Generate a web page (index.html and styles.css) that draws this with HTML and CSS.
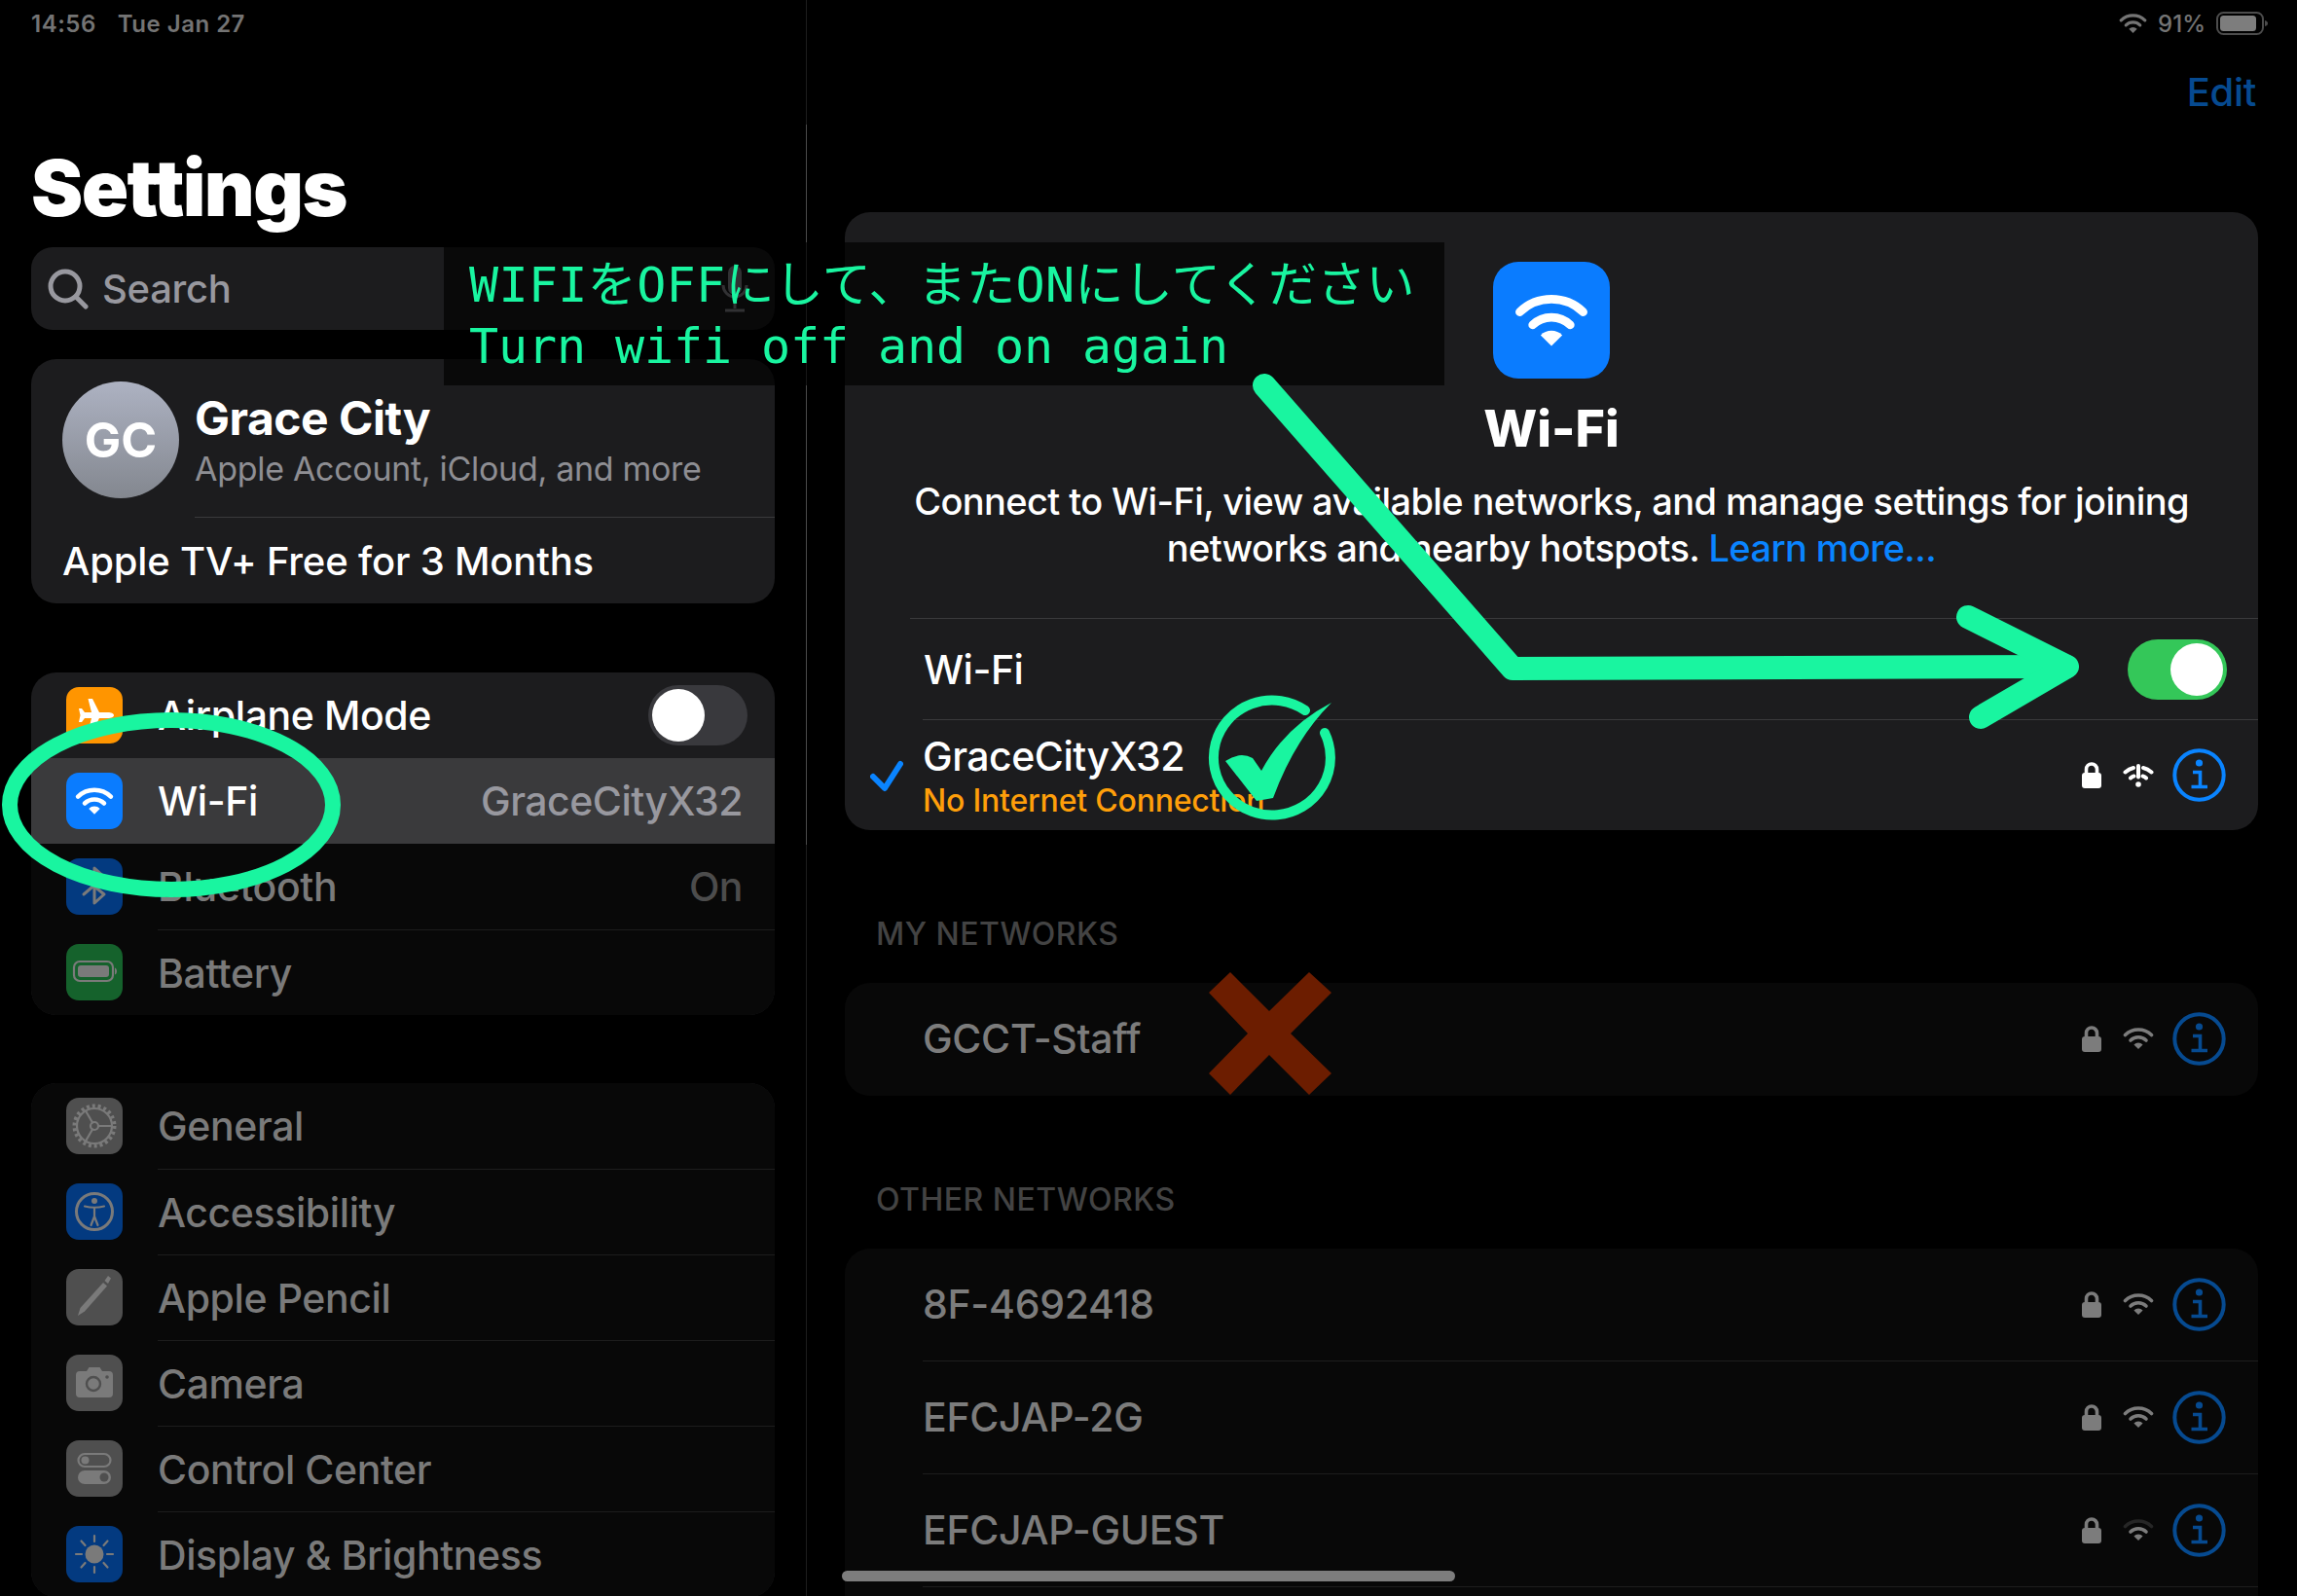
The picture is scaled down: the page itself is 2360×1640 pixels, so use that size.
FILE: index.html
```html
<!DOCTYPE html>
<html lang="en">
  <head>
    <meta charset="UTF-8" />
    <title>Settings - Wi-Fi</title>
    <link rel="stylesheet" href="styles.css">
  </head>

  <body>
    <!-- shared icons -->
    <svg class="defs" width="0" height="0">
      <symbol id="i-wifi" viewBox="0 0 32 24">
        <path class="arc arc-outer" d="M2.5 8.500a19.500 19.500 0 0 1 27 0" />
        <path class="arc" d="M8 14a11.600 11.600 0 0 1 16 0" />
        <path class="solid" d="M16 23l-4.600-4.600a6.500 6.500 0 0 1 9.200 0z" />
      </symbol>
      <symbol id="i-lock" viewBox="0 0 20 27">
        <rect class="solid" x="0" y="11" width="20" height="16" rx="3" />
        <path class="arc" d="M4.500 12V7.500a5.500 5.500 0 0 1 11 0V12" />
      </symbol>
      <symbol id="i-info" viewBox="0 0 55 55">
        <circle class="ring" cx="27.500" cy="27.500" r="25.200" />
        <circle class="solid" cx="27.500" cy="15" r="3.600" />
        <path class="serif" d="M21 24.500h7.500v15M19.500 39.500h16.500" />
      </symbol>
    </svg>

    <div class="app">
      <aside class="sidebar">
        <div class="status status-left"><span>14:56</span><span>Tue Jan 27</span></div>
        <h1 class="page-title">Settings</h1>

        <div class="search">
          <svg class="search-icon" viewBox="0 0 42 42">
            <circle cx="18" cy="18" r="15" />
            <path d="M29 29l10 10" />
          </svg>
          <span class="search-text">Search</span>
          <svg class="mic" viewBox="0 0 28 48">
            <rect x="7" y="0" width="14" height="30" rx="7" />
            <path class="mic-line" d="M2 20a12 12 0 0 0 24 0M14 33v11M4 46h20" />
          </svg>
        </div>

        <section class="card profile">
          <div class="profile-top">
            <div class="avatar">GC</div>
            <div class="profile-text">
              <div class="profile-name">Grace City</div>
              <div class="profile-sub">Apple Account, iCloud, and more</div>
            </div>
          </div>
          <div class="profile-offer">Apple TV+ Free for 3 Months</div>
        </section>

        <section class="card group">
          <div class="row">
            <div class="app-icon orange">
              <svg viewBox="0 0 58 58"><path class="solid" d="M49 29c0 2-3 3-6 3h-9l-7 14h-4.500l3.500-14h-7l-3 4h-3l1.500-7-1.500-7h3l3 4h7l-3.500-14h4.500l7 14h9c3 0 6 1 6 3z" /></svg>
            </div>
            <div class="row-body">
              <span class="row-label">Airplane Mode</span>
              <div class="toggle side-toggle"><div class="knob"></div></div>
            </div>
          </div>
          <div class="row selected">
            <div class="app-icon blue">
              <svg class="icon-wifi" viewBox="0 0 32 24"><use href="#i-wifi" /></svg>
            </div>
            <div class="row-body">
              <span class="row-label">Wi-Fi</span>
              <span class="row-value">GraceCityX32</span>
            </div>
          </div>
          <div class="row dim">
            <div class="app-icon dim-blue">
              <svg viewBox="0 0 58 58"><path class="line" d="M18 20l21 17-10 9V10l10 9-21 18" /></svg>
            </div>
            <div class="row-body">
              <span class="row-label">Bluetooth</span>
              <span class="row-value">On</span>
            </div>
          </div>
          <div class="row dim ruled">
            <div class="app-icon dim-green">
              <svg viewBox="0 0 58 58">
                <rect class="line thin" x="8" y="18" width="40" height="20" rx="6" />
                <rect class="solid" x="12" y="22" width="32" height="12" rx="3" />
                <path class="solid" d="M50 24.500c1.500.5 2 2 2 3.500s-.5 3-2 3.500z" />
              </svg>
            </div>
            <div class="row-body"><span class="row-label">Battery</span></div>
          </div>
        </section>

        <section class="card group group-second">
          <div class="row dim">
            <div class="app-icon dim-gray">
              <svg viewBox="0 0 58 58">
                <circle class="teeth" cx="29" cy="29" r="20.500" />
                <circle class="line thin" cx="29" cy="29" r="18" />
                <path class="line thin" d="M33 29h14M27 25.500l-7-12M27 32.500l-7 12" />
                <circle class="line thin" cx="29" cy="29" r="4" />
              </svg>
            </div>
            <div class="row-body"><span class="row-label">General</span></div>
          </div>
          <div class="row dim ruled">
            <div class="app-icon dim-blue">
              <svg viewBox="0 0 58 58">
                <circle class="line" cx="29" cy="29" r="18.500" />
                <circle class="solid" cx="29" cy="18" r="3" />
                <path class="line thin" d="M19 23.500q10 2.500 20 0M29 25v9M29 34l-3.500 9M29 34l3.500 9" />
              </svg>
            </div>
            <div class="row-body"><span class="row-label">Accessibility</span></div>
          </div>
          <div class="row dim ruled">
            <div class="app-icon dim-gray">
              <svg viewBox="0 0 58 58">
                <path class="solid" d="M12 48l2.500-8 23.500-26 4 3.500-23 26z" />
                <path class="solid" d="M39.500 12l3.500-5 3 2.500-3 5.500z" />
              </svg>
            </div>
            <div class="row-body"><span class="row-label">Apple Pencil</span></div>
          </div>
          <div class="row dim ruled">
            <div class="app-icon dim-gray">
              <svg viewBox="0 0 58 58">
                <path class="solid" d="M14 17h7l2.500-4h11l2.500 4h7a4 4 0 0 1 4 4v19a4 4 0 0 1-4 4H14a4 4 0 0 1-4-4V21a4 4 0 0 1 4-4z" />
                <circle class="cut" cx="28" cy="30" r="7" />
                <circle class="cut-dot" cx="42" cy="23" r="1.800" />
              </svg>
            </div>
            <div class="row-body"><span class="row-label">Camera</span></div>
          </div>
          <div class="row dim ruled">
            <div class="app-icon dim-gray">
              <svg viewBox="0 0 58 58">
                <rect class="line thin" x="12.500" y="14" width="33" height="13" rx="6.500" />
                <circle class="solid" cx="19.500" cy="20.500" r="4" />
                <rect class="solid" x="12" y="31" width="34" height="14" rx="7" />
                <circle class="cut-dot" cx="39" cy="38" r="4.500" />
              </svg>
            </div>
            <div class="row-body"><span class="row-label">Control Center</span></div>
          </div>
          <div class="row dim ruled">
            <div class="app-icon dim-blue">
              <svg viewBox="0 0 58 58">
                <circle class="solid" cx="29" cy="29" r="9.500" />
                <path class="line thin" d="M29 10v6M29 42v6M10 29h6M42 29h6M15.500 15.500l4 4.500M38.500 38l4 4.500M15.500 42.500l4-4.500M38.500 20l4-4.500" />
              </svg>
            </div>
            <div class="row-body"><span class="row-label">Display &amp; Brightness</span></div>
          </div>
        </section>
      </aside>

      <div class="pane-rule"></div>

      <main class="detail">
        <div class="status status-right">
          <svg class="status-wifi" viewBox="0 0 32 24"><use href="#i-wifi" /></svg>
          <span>91%</span>
          <svg class="status-battery" viewBox="0 0 54 24">
            <rect class="batt-shell" x="1" y="1" width="47" height="22" rx="6.500" />
            <rect class="batt-level" x="4" y="4" width="37" height="16" rx="3.500" />
            <path class="batt-tip" d="M50 9c2 .5 3 1.500 3 3s-1 2.500-3 3z" />
          </svg>
        </div>
        <div class="nav-bar"><span class="edit">Edit</span></div>

        <section class="card wifi-card">
          <div class="hero">
            <div class="hero-icon">
              <svg viewBox="0 0 32 24"><use href="#i-wifi" /></svg>
            </div>
            <h2 class="hero-title">Wi-Fi</h2>
            <p class="hero-text">
              Connect to Wi-Fi, view available networks, and manage settings for joining<br />
              networks and nearby hotspots. <span class="link">Learn more...</span>
            </p>
          </div>
          <div class="wifi-switch">
            <span class="net-name">Wi-Fi</span>
            <div class="toggle on"><div class="knob"></div></div>
          </div>
          <div class="net current">
            <div class="gutter">
              <svg class="tick" viewBox="0 0 34 33"><path d="M3 17l12 12L31 4" /></svg>
            </div>
            <div class="net-body">
              <div class="net-label">
                <div class="net-name">GraceCityX32</div>
                <div class="net-warn">No Internet Connection</div>
              </div>
              <svg class="lock"><use href="#i-lock" /></svg>
              <svg class="signal" viewBox="0 0 32 24">
                <path class="arc" d="M2.500 8.500q4-3.500 8.500-4.500M29.500 8.500q-4-3.500-8.500-4.500M8 14.500q1.500-1.500 3.500-2M24 14.500q-1.500-1.500-3.500-2" />
                <rect class="solid" x="14" y="0" width="4" height="15.500" rx="2" />
                <circle class="solid" cx="16" cy="21" r="2.800" />
              </svg>
              <svg class="info"><use href="#i-info" /></svg>
            </div>
          </div>
        </section>

        <h3 class="section-head">MY NETWORKS</h3>
        <section class="card dim-card">
          <div class="net">
            <div class="gutter"></div>
            <div class="net-body">
              <div class="net-label"><div class="net-name">GCCT-Staff</div></div>
              <svg class="lock"><use href="#i-lock" /></svg>
              <svg class="signal"><use href="#i-wifi" /></svg>
              <svg class="info"><use href="#i-info" /></svg>
            </div>
          </div>
        </section>

        <h3 class="section-head">OTHER NETWORKS</h3>
        <section class="card dim-card">
          <div class="net">
            <div class="gutter"></div>
            <div class="net-body">
              <div class="net-label"><div class="net-name">8F-4692418</div></div>
              <svg class="lock"><use href="#i-lock" /></svg>
              <svg class="signal"><use href="#i-wifi" /></svg>
              <svg class="info"><use href="#i-info" /></svg>
            </div>
          </div>
          <div class="net ruled">
            <div class="gutter"></div>
            <div class="net-body">
              <div class="net-label"><div class="net-name">EFCJAP-2G</div></div>
              <svg class="lock"><use href="#i-lock" /></svg>
              <svg class="signal"><use href="#i-wifi" /></svg>
              <svg class="info"><use href="#i-info" /></svg>
            </div>
          </div>
          <div class="net ruled">
            <div class="gutter"></div>
            <div class="net-body">
              <div class="net-label"><div class="net-name">EFCJAP-GUEST</div></div>
              <svg class="lock"><use href="#i-lock" /></svg>
              <svg class="signal weak"><use href="#i-wifi" /></svg>
              <svg class="info"><use href="#i-info" /></svg>
            </div>
          </div>
          <div class="net ruled"></div>
        </section>
      </main>
    </div>

    <div class="home-bar"></div>

    <!-- annotations drawn on top of the screenshot -->
    <div class="note">
      <div class="note-ja">WIFIをOFFにして、またONにしてください</div>
      <div class="note-en">Turn wifi off and on again</div>
    </div>

    <svg class="marks" viewBox="0 0 2360 1640">
      <ellipse class="mark" cx="176" cy="827" rx="166" ry="87" />
      <path class="mark arrow" d="M1299 396L1554 687L2123 685" />
      <path class="mark arrow" d="M2022 634L2124 685L2035 737" />
      <path class="mark check-ring" d="M1341 730A60 59 0 1 0 1361 753" />
      <path class="mark-fill" d="M1259 782Q1274 772 1287 779L1296 792Q1320 747 1368 722Q1330 760 1308 820L1291 823Z" />
      <polygon class="cross" points="1264,999 1304,1039 1345,999 1368,1020 1326,1062 1368,1103 1345,1125 1304,1084 1264,1125 1242,1103 1282,1062 1242,1020" />
    </svg>
  </body>
</html>
```

FILE: styles.css
```css
* {
  margin: 0;
  padding: 0;
  box-sizing: border-box;
}

html,
body {
  width: 2360px;
  height: 1640px;
  overflow: hidden;
  background: #000;
}

body {
  position: relative;
  font-family: Inter, "Liberation Sans", sans-serif;
  color: #fff;
}

.defs {
  position: absolute;
}

/* shared svg parts */
.arc {
  fill: none;
  stroke: currentColor;
  stroke-width: 3.6;
  stroke-linecap: round;
}

.arc-outer {
  stroke: var(--outer, currentColor);
}

.solid {
  fill: currentColor;
}

.line {
  fill: none;
  stroke: currentColor;
  stroke-width: 3;
  stroke-linecap: round;
  stroke-linejoin: round;
}

.line.thin {
  stroke-width: 2.2;
}

.teeth {
  fill: none;
  stroke: currentColor;
  stroke-width: 4;
  stroke-dasharray: 3 2.860;
}

.cut {
  fill: none;
  stroke: #4f4f4f;
  stroke-width: 2.400;
}

.cut-dot {
  fill: #4f4f4f;
}

.ring {
  fill: none;
  stroke: currentColor;
  stroke-width: 4;
}

.serif {
  fill: none;
  stroke: currentColor;
  stroke-width: 3.600;
}

.app {
  display: flex;
  height: 1640px;
  overflow: hidden;
}

/* sidebar */
.sidebar {
  width: 828px;
  flex: none;
  padding: 0 32px;
}

.pane-rule {
  width: 1px;
  flex: none;
  background: linear-gradient(#1c1c1c 128px, #4a4a4a 128px, #4a4a4a 868px, #1c1c1c 868px);
}

.status {
  height: 48px;
  display: flex;
  align-items: center;
  font-size: 24px;
  font-weight: 600;
  color: #747474;
}

.status-left {
  gap: 22px;
  letter-spacing: 0.5px;
}

.page-title {
  margin-top: 91px;
  height: 115px;
  font-size: 80px;
  line-height: 108px;
  font-weight: 900;
  letter-spacing: -1.600px;
}

.search {
  height: 85px;
  display: flex;
  align-items: center;
  padding: 0 27px 0 17px;
  background: #1c1c1e;
  border-radius: 22px;
}

.search-icon {
  width: 42px;
  height: 42px;
  fill: none;
  stroke: #98989f;
  stroke-width: 5;
  stroke-linecap: round;
}

.search-text {
  flex: 1;
  margin-left: 14px;
  font-size: 40px;
  font-weight: 500;
  letter-spacing: -0.3px;
  color: #98989f;
}

.mic {
  width: 28px;
  height: 48px;
  fill: #98989f;
}

.mic-line {
  fill: none;
  stroke: #98989f;
  stroke-width: 3;
}

.card {
  background: #1c1c1e;
  border-radius: 26px;
  overflow: hidden;
}

.profile {
  margin-top: 30px;
  height: 251px;
}

.profile-top {
  height: 163px;
  display: flex;
  align-items: center;
  padding-top: 3px;
  padding-left: 32px;
  gap: 16px;
}

.avatar {
  width: 120px;
  height: 120px;
  flex: none;
  border-radius: 50%;
  background: linear-gradient(#adb2c2, #83878f);
  display: flex;
  align-items: center;
  justify-content: center;
  font-size: 50px;
  font-weight: 700;
}

.profile-text {
  flex: 1;
  align-self: stretch;
  border-bottom: 1px solid #3a3a3c;
}

.profile-name {
  margin-top: 30px;
  font-size: 48px;
  line-height: 56px;
  font-weight: 700;
  letter-spacing: -0.5px;
}

.profile-sub {
  margin-top: 1px;
  font-size: 34px;
  line-height: 46px;
  color: #8e8e93;
  letter-spacing: -0.3px;
}

.profile-offer {
  height: 88px;
  padding-left: 32px;
  font-size: 40px;
  font-weight: 500;
  line-height: 90px;
  letter-spacing: -0.18px;
}

.group {
  margin-top: 71px;
}

.group-second {
  margin-top: 70px;
}

.row {
  height: 88px;
  display: flex;
  align-items: center;
  padding-left: 36px;
  gap: 36px;
}

.row.selected {
  background: #3a3a3c;
}

.row.dim {
  background: #080808;
  color: #7a7a7a;
}

.row-body {
  flex: 1;
  height: 100%;
  display: flex;
  align-items: center;
  justify-content: space-between;
  padding-right: 33px;
}

.row.ruled .row-body {
  border-top: 1px solid #1d1d1d;
}

.row-label {
  font-size: 41px;
  font-weight: 500;
  letter-spacing: -0.4px;
}

.row-value {
  font-size: 41px;
  font-weight: 500;
  letter-spacing: -0.5px;
  color: #98989f;
}

.row.dim .row-value {
  color: #4c4c4c;
}

.app-icon {
  width: 58px;
  height: 58px;
  flex: none;
  border-radius: 13px;
  display: flex;
  align-items: center;
  justify-content: center;
}

.app-icon svg {
  width: 58px;
  height: 58px;
}

.app-icon .icon-wifi {
  width: 40px;
  height: 30px;
}

.orange {
  background: #ff9500;
}

.blue {
  background: #0a7cff;
}

.dim-blue {
  background: #033a80;
}

.dim-green {
  background: #15622c;
}

.dim-gray {
  background: #4f4f4f;
}

/* toggles */
.toggle {
  width: 102px;
  height: 62px;
  padding: 4px;
  border-radius: 31px;
  background: #39393d;
  display: flex;
}

.side-toggle {
  margin-right: -5px;
}

.toggle.on {
  background: #34c759;
  justify-content: flex-end;
}

.knob {
  width: 54px;
  height: 54px;
  border-radius: 50%;
  background: #fff;
}

/* right pane */
.detail {
  flex: 1;
  padding: 0 40px 0 39px;
  overflow: hidden;
}

.status-right {
  justify-content: flex-end;
  margin-right: -11px;
  font-weight: 500;
}

.status-wifi {
  width: 29px;
  height: 22px;
}

.status-right span {
  margin-left: 11px;
}

.status-battery {
  width: 54px;
  height: 24px;
  margin-left: 11px;
}

.batt-shell {
  fill: none;
  stroke: #4c4c4c;
  stroke-width: 2;
}

.batt-level {
  fill: #7d7d7d;
}

.batt-tip {
  fill: #4c4c4c;
}

.nav-bar {
  height: 170px;
  padding-top: 23px;
  text-align: right;
}

.edit {
  font-size: 40px;
  font-weight: 500;
  letter-spacing: -0.3px;
  line-height: 48px;
  color: #064a90;
  display: block;
  margin-right: 2px;
}

.wifi-card {
  height: 635px;
}

.hero {
  height: 417px;
  padding-top: 51px;
  display: flex;
  flex-direction: column;
  align-items: center;
}

.hero-icon {
  width: 120px;
  height: 120px;
  border-radius: 26px;
  background: #0a7cff;
  display: flex;
  align-items: center;
  justify-content: center;
}

.hero-icon svg {
  width: 78px;
  height: 58px;
}

.hero-title {
  margin-top: 20px;
  font-size: 52px;
  line-height: 64px;
  font-weight: 800;
}

.hero-text {
  margin-top: 18px;
  font-size: 38px;
  font-weight: 500;
  line-height: 48px;
  text-align: center;
  letter-spacing: -0.6px;
}

.link {
  color: #0a84ff;
}

.wifi-switch {
  height: 104px;
  margin-left: 67px;
  padding: 0 32px 0 14px;
  border-top: 1px solid #3a3a3c;
  display: flex;
  align-items: center;
  justify-content: space-between;
}

.net {
  height: 116px;
  display: flex;
  padding-left: 26px;
}

.net.current {
  height: 114px;
}

.gutter {
  width: 54px;
  flex: none;
  display: flex;
  align-items: center;
}

.tick {
  width: 34px;
  height: 33px;
  margin-top: 2px;
  fill: none;
  stroke: #0a84ff;
  stroke-width: 6;
  stroke-linecap: round;
  stroke-linejoin: round;
}

.net-body {
  flex: 1;
  display: flex;
  align-items: center;
  padding-right: 33px;
}

.net.current .net-body {
  border-top: 1px solid #3a3a3c;
}

.dim-card .net-body {
  padding-bottom: 2px;
}

.net.ruled {
  position: relative;
}

.net.ruled::before {
  content: "";
  position: absolute;
  left: 80px;
  right: 0;
  top: -1px;
  border-top: 1px solid #1d1d1d;
}

.net-label {
  flex: 1;
}

.net.current .net-label {
  align-self: flex-start;
  padding-top: 12px;
}

.net-name {
  font-size: 41px;
  font-weight: 500;
  line-height: 50px;
  letter-spacing: -0.3px;
}

.wifi-card .net-name {
  letter-spacing: -0.5px;
}

.net-warn {
  margin-top: 2px;
  font-size: 32px;
  font-weight: 500;
  line-height: 38px;
  color: #ff9f0a;
  letter-spacing: -0.2px;
}

.lock {
  width: 20px;
  height: 27px;
  color: #fff;
}

.signal {
  width: 32px;
  height: 24px;
  margin-left: 22px;
  color: #fff;
}

.signal .arc {
  stroke-width: 4;
}

.info {
  width: 55px;
  height: 55px;
  margin-left: 19px;
  color: #0a84ff;
}

.section-head {
  margin-top: 87px;
  margin-bottom: 30px;
  padding-left: 32px;
  font-size: 32px;
  line-height: 40px;
  font-weight: 500;
  letter-spacing: 0.5px;
  color: #434343;
}

.dim-card {
  background: #080808;
  overflow: visible;
}

.dim-card .net-name {
  color: #7c7c7c;
}

.dim-card .lock,
.dim-card .signal {
  color: #7c7c7c;
}

.dim-card .info {
  color: #064a90;
}

.weak {
  --outer: #262626;
}

/* overlays */
.home-bar {
  position: absolute;
  left: 865px;
  top: 1614px;
  width: 630px;
  height: 11px;
  border-radius: 6px;
  background: #7d7d7d;
}

.note {
  position: absolute;
  left: 456px;
  top: 249px;
  width: 1028px;
  height: 147px;
  padding: 13px 0 0 26px;
  background: rgba(0, 0, 0, 0.68);
  color: #19f5a0;
  font-family: "DejaVu Sans Mono", "Noto Sans CJK JP", monospace;
  font-size: 50px;
  line-height: 63px;
  white-space: nowrap;
}

.note-ja {
  letter-spacing: 0.35px;
}

.note-en {
  letter-spacing: -0.1px;
}

.marks {
  position: absolute;
  left: 0;
  top: 0;
  width: 2360px;
  height: 1640px;
  pointer-events: none;
}

.mark {
  fill: none;
  stroke: #19f5a0;
  stroke-width: 16;
}

.arrow {
  stroke-width: 24;
  stroke-linecap: round;
  stroke-linejoin: round;
}

.check-ring {
  stroke-width: 10;
  stroke-linecap: round;
}

.mark-fill {
  fill: #19f5a0;
}

.cross {
  fill: #6c1d00;
}
```
